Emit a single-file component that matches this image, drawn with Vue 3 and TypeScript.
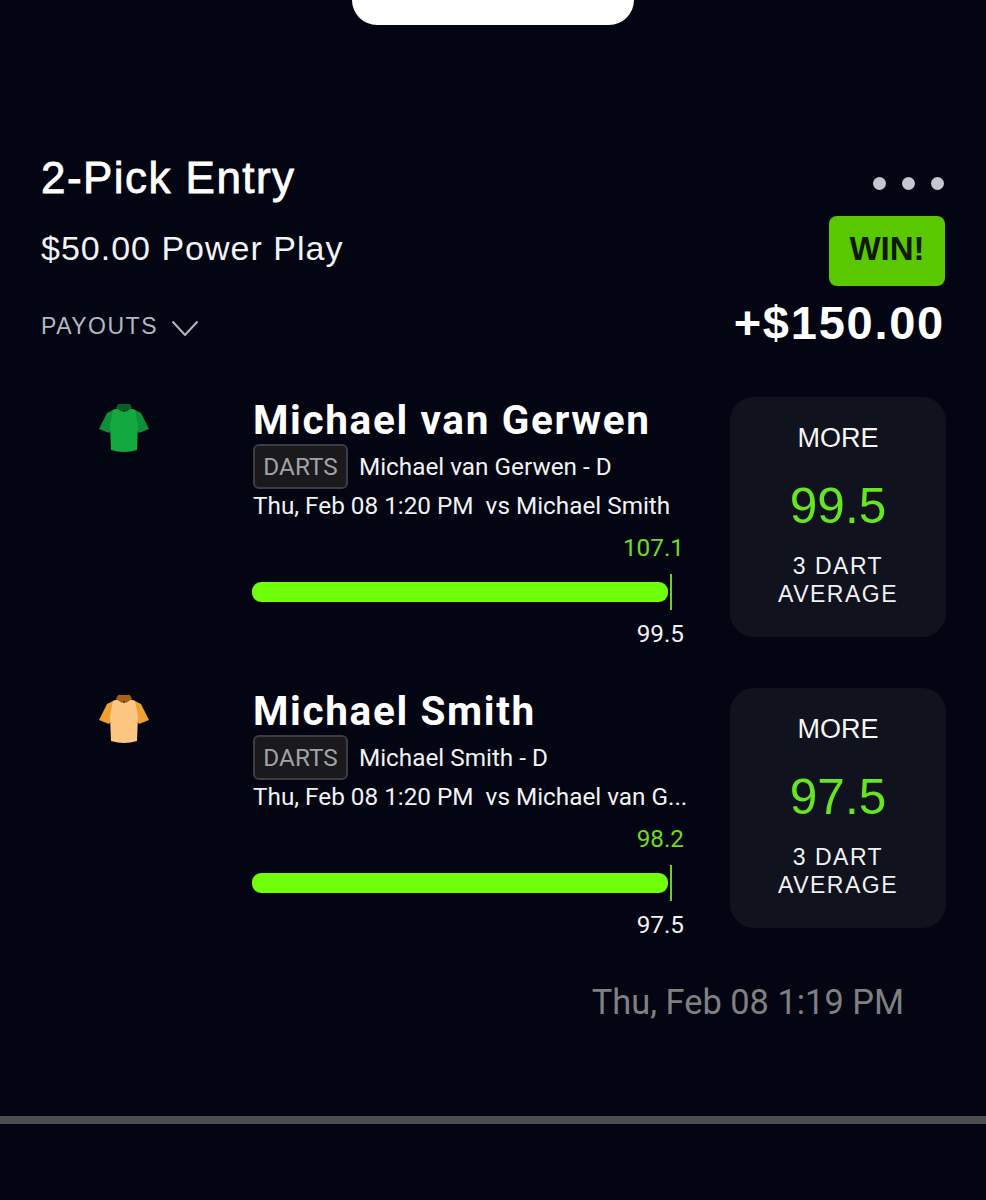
<script setup lang="ts">
type Pick = {
  name: string;
  detail: string;
  game: string;
  actual: string;
  line: string;
  shirt: string;
  sleeve: string;
  collar: string;
};

const picks: Pick[] = [
  {
    name: "Michael van Gerwen",
    detail: "Michael van Gerwen - D",
    game: "Thu, Feb 08 1:20 PM  vs Michael Smith",
    actual: "107.1",
    line: "99.5",
    shirt: "#14a840",
    sleeve: "#0f8f38",
    collar: "#0b5c2a",
  },
  {
    name: "Michael Smith",
    detail: "Michael Smith - D",
    game: "Thu, Feb 08 1:20 PM  vs Michael van G...",
    actual: "98.2",
    line: "97.5",
    shirt: "#fdc683",
    sleeve: "#f0a030",
    collar: "#a8601c",
  },
];
</script>

<template>
  <div class="screen">
    <div class="notch"></div>

    <header class="entry">
      <div class="entry-left">
        <h1 class="entry-title">2-Pick Entry</h1>
        <div class="entry-sub">$50.00 Power Play</div>
        <div class="payouts">
          <span>PAYOUTS</span>
          <svg width="28" height="16" viewBox="0 0 28 16" fill="none">
            <path d="M1.5 1.5 L14 15 L26.5 1.5" stroke="#b4b7c0" stroke-width="2" />
          </svg>
        </div>
      </div>
      <div class="entry-right">
        <div class="dots"><i></i><i></i><i></i></div>
        <div class="win">WIN!</div>
        <div class="amount">+$150.00</div>
      </div>
    </header>

    <section class="picks">
      <article v-for="pick in picks" :key="pick.name" class="pick">
        <div class="shirt-col">
          <svg width="50" height="52" viewBox="0 0 50 52">
            <path d="M16 6 L8 10 L0 26 L10 30 L14 24 Z" :fill="pick.sleeve" />
            <path d="M34 6 L42 10 L50 26 L40 30 L36 24 Z" :fill="pick.sleeve" />
            <path
              d="M14 7 L20 5 L25 9 L30 5 L36 7 L39 22 L38 47 Q25 51 12 47 L11 22 Z"
              :fill="pick.shirt"
            />
            <path
              d="M17 5 L19 1 L31 1 L33 5 L27 9 L25 7 L23 9 Z"
              :fill="pick.collar"
            />
          </svg>
        </div>

        <div class="info">
          <h2 class="name">{{ pick.name }}</h2>
          <div class="tag-row">
            <span class="tag">DARTS</span>
            <span>{{ pick.detail }}</span>
          </div>
          <div class="game">{{ pick.game }}</div>
          <div class="actual">{{ pick.actual }}</div>
          <div class="bar-wrap">
            <div class="bar"></div>
            <div class="tick"></div>
          </div>
          <div class="line">{{ pick.line }}</div>
        </div>

        <div class="card">
          <div class="more">MORE</div>
          <div class="value">{{ pick.line }}</div>
          <div class="stat">3 DART<br />AVERAGE</div>
        </div>
      </article>
    </section>

    <div class="placed">Thu, Feb 08 1:19 PM</div>
    <div class="divider"></div>
  </div>
</template>

<style>
html,
body {
  background: #030512;
}
</style>

<style scoped>
.screen {
  width: 986px;
  height: 1200px;
  background: #030512;
  color: #fff;
  font-family: Roboto, "Liberation Sans", sans-serif;
  overflow: hidden;
}

.notch {
  width: 282px;
  height: 25px;
  margin: 0 auto;
  background: #fff;
  border-radius: 0 0 26px 26px;
}

.entry {
  display: flex;
  justify-content: space-between;
  padding: 126px 41px 0;
}

.entry-title,
.entry-sub,
.payouts,
.amount,
.win,
.more,
.value,
.stat {
  font-family: "Liberation Sans", sans-serif;
}

.entry-title {
  margin: 0;
  height: 54px;
  font-size: 44px;
  line-height: 54px;
  font-weight: 400;
  letter-spacing: 1.45px;
  -webkit-text-stroke: 0.8px #fff;
}

.entry-sub {
  margin-top: 25px;
  font-size: 34px;
  line-height: 36px;
  letter-spacing: 1px;
  color: #f2f3f5;
  white-space: nowrap;
}

.payouts {
  display: flex;
  align-items: center;
  gap: 13px;
  margin-top: 47px;
  color: #b4b7c0;
  font-size: 23px;
  line-height: 26px;
  letter-spacing: 1.5px;
}

.payouts svg {
  margin-top: 3px;
}

.entry-right {
  display: flex;
  flex-direction: column;
  align-items: flex-end;
}

.dots {
  display: flex;
  gap: 16px;
  margin-top: 26px;
  margin-right: 1px;
}

.dots i {
  display: block;
  width: 13px;
  height: 13px;
  border-radius: 50%;
  background: #c4c6d0;
}

.win {
  width: 116px;
  height: 70px;
  margin-top: 26px;
  border-radius: 8px;
  background: #5ac800;
  color: #10180a;
  font-size: 33px;
  font-weight: 700;
  line-height: 66px;
  text-align: center;
}

.amount {
  margin-top: 9px;
  margin-right: 0;
  font-size: 47px;
  line-height: 56px;
  font-weight: 700;
  letter-spacing: 1.75px;
}

.picks {
  display: flex;
  flex-direction: column;
  gap: 51px;
  margin-top: 46px;
  padding: 0 41px;
}

.pick {
  display: flex;
  height: 240px;
}

.shirt-col {
  width: 212px;
  padding: 6px 0 0 58px;
  box-sizing: border-box;
  flex-shrink: 0;
}

.info {
  width: 477px;
  flex-shrink: 0;
}

.name {
  margin: 0;
  font-size: 40.5px;
  line-height: 46px;
  font-weight: 700;
  letter-spacing: 1.65px;
  white-space: nowrap;
}

.tag-row {
  display: flex;
  align-items: center;
  gap: 11px;
  height: 46px;
  font-size: 24.3px;
  color: #f2f2f4;
}

.tag {
  display: block;
  box-sizing: border-box;
  width: 95px;
  height: 45px;
  border: 2px solid #3b3c44;
  border-radius: 6px;
  background: #1a1a1d;
  color: #a2a2a6;
  font-size: 24.3px;
  line-height: 41px;
  text-align: center;
}

.game {
  margin-top: 1px;
  font-size: 24.3px;
  line-height: 32px;
  color: #f2f2f4;
  white-space: pre;
}

.actual {
  width: 431px;
  margin-top: 10px;
  font-size: 24.3px;
  line-height: 32px;
  color: #6fdc1e;
  text-align: right;
}

.bar-wrap {
  position: relative;
  width: 432px;
  height: 36px;
  margin-top: 10px;
}

.bar {
  position: absolute;
  top: 8px;
  left: -1px;
  width: 416px;
  height: 20px;
  border-radius: 9px;
  background: #70ff0a;
}

.tick {
  position: absolute;
  top: 0;
  left: 417px;
  width: 2px;
  height: 36px;
  background: #6cd11c;
}

.line {
  width: 431px;
  margin-top: 8px;
  font-size: 24.3px;
  line-height: 32px;
  color: #f2f2f4;
  text-align: right;
}

.card {
  width: 216px;
  height: 240px;
  flex-shrink: 0;
  margin-left: auto;
  border-radius: 24px;
  background: #10121e;
  text-align: center;
}

.more {
  margin-top: 23px;
  font-size: 27px;
  line-height: 36px;
  color: #f6f6f8;
}

.value {
  margin-top: 22px;
  font-size: 49.5px;
  line-height: 56px;
  color: #66e522;
}

.stat {
  margin-top: 18px;
  font-size: 23px;
  line-height: 28px;
  letter-spacing: 1.5px;
  color: #f2f2f4;
}

.placed {
  margin-top: 52px;
  padding-right: 82px;
  text-align: right;
  font-size: 34.4px;
  line-height: 44px;
  color: #808082;
}

.divider {
  height: 8px;
  margin-top: 92px;
  background: #4b4c4e;
}
</style>
